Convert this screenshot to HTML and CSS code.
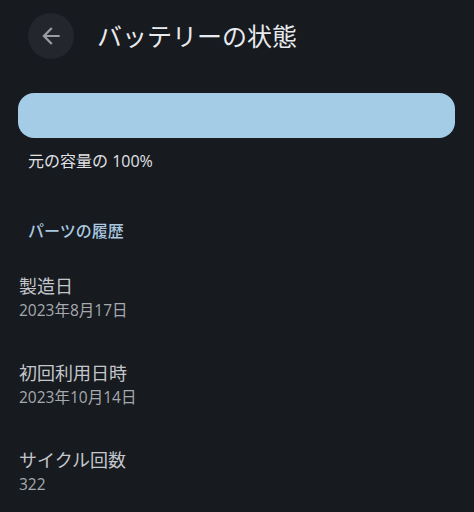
FILE: index.html
```html
<!DOCTYPE html>
<html lang="ja">
<head>
    <meta charset="UTF-8">
    <title>バッテリーの状態</title>
    <link rel="stylesheet" href="styles.css">
</head>
<body>
<div class="page">
    <div class="header">
        <div class="back">
            <svg width="26" height="26" viewBox="0 0 24 24">
                <path d="M20 11H7.83l5.59-5.59L12 4l-8 8 8 8 1.41-1.41L7.83 13H20v-2z" fill="#9a9da3"/>
            </svg>
        </div>
        <h1 class="title">バッテリーの状態</h1>
    </div>

    <div class="bar"></div>
    <p class="capacity">元の容量の 100%</p>

    <h2 class="section">パーツの履歴</h2>

    <div class="item">
        <div class="label">製造日</div>
        <div class="value">2023年8月17日</div>
    </div>
    <div class="item">
        <div class="label">初回利用日時</div>
        <div class="value">2023年10月14日</div>
    </div>
    <div class="item">
        <div class="label">サイクル回数</div>
        <div class="value">322</div>
    </div>
</div>
</body>
</html>
```

FILE: styles.css
```css
* {
    margin: 0;
    padding: 0;
    box-sizing: border-box;
}

html, body {
    background-color: #171a1f;
}

body {
    font-family: "Open Sans", "Noto Sans CJK JP", sans-serif;
    color: #e4e6ea;
}

.page {
    width: 474px;
    height: 512px;
    overflow: hidden;
}

.header {
    display: flex;
    align-items: center;
    height: 72px;
    padding-left: 28px;
}

.back {
    width: 46px;
    height: 46px;
    border-radius: 50%;
    background-color: #23262c;
    display: flex;
    align-items: center;
    justify-content: center;
}

.title {
    margin-left: 23px;
    font-size: 25px;
    font-weight: 400;
    color: #e8eaee;
    line-height: 1;
}

.bar {
    margin: 21px 19px 0 18px;
    height: 45px;
    border-radius: 16px;
    background-color: #a4cce7;
}

.capacity {
    margin: 12px 0 0 28px;
    font-size: 16px;
    line-height: 22px;
    color: #e0e2e6;
}

.section {
    margin: 48px 0 0 28px;
    font-size: 16px;
    font-weight: 500;
    line-height: 22px;
    color: #a9c8e0;
}

.item {
    padding-left: 19px;
    margin-top: 32px;
}

.item + .item {
    margin-top: 40px;
}

.label {
    font-size: 18px;
    line-height: 24px;
    color: #c3c6cb;
}

.value {
    margin-top: 2px;
    font-size: 15.5px;
    line-height: 21px;
    color: #a6a9ae;
}
```
